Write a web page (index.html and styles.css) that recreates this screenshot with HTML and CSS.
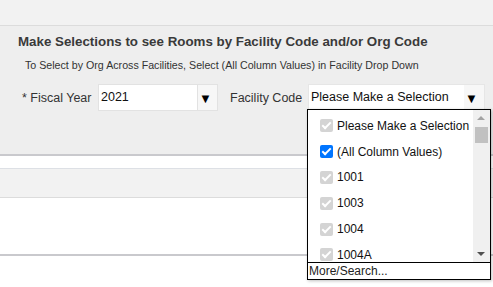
FILE: index.html
```html
<!DOCTYPE html>
<html>
<head>
<meta charset="utf-8">
<link rel="stylesheet" href="styles.css">
</head>
<body>
<div class="topbar"></div>
<div class="panel">
  <div class="title">Make Selections to see Rooms by Facility Code and/or Org Code</div>
  <div class="hint">To Select by Org Across Facilities, Select (All Column Values) in Facility Drop Down</div>
  <div class="row">
    <span class="label">* Fiscal Year</span>
    <div class="select fy">
      <span class="val">2021</span>
      <span class="arrow">&#9660;</span>
    </div>
    <span class="label fc">Facility Code</span>
    <div class="select fac">
      <span class="val">Please Make a Selection</span>
      <span class="arrow">&#9660;</span>
    </div>
  </div>
</div>
<div class="gap"></div>
<div class="band"></div>
<div class="body"></div>

<div class="dropdown">
  <div class="list">
    <div class="items">
      <div class="item"><span class="cb gray"></span>Please Make a Selection</div>
      <div class="item"><span class="cb blue"></span>(All Column Values)</div>
      <div class="item"><span class="cb gray"></span>1001</div>
      <div class="item"><span class="cb gray"></span>1003</div>
      <div class="item"><span class="cb gray"></span>1004</div>
      <div class="item"><span class="cb gray"></span>1004A</div>
    </div>
    <div class="scroll">
      <span class="up"></span>
      <span class="thumb"></span>
      <span class="down"></span>
    </div>
  </div>
  <div class="more">More/Search...</div>
</div>
</body>
</html>
```
FILE: styles.css
```css
html, body {
  margin: 0;
  padding: 0;
  background: #fff;
  font-family: "Liberation Sans", Arial, sans-serif;
  width: 493px;
  height: 287px;
  overflow: hidden;
}
.topbar {
  height: 25px;
  background: #f2f2f2;
  border-bottom: 1px solid #dcdcdc;
}
.panel {
  background: #eeeeee;
  border-bottom: 2px solid #c9c9cd;
  padding: 8px 0 0 0;
  box-sizing: border-box;
  height: 130px;
}
.title {
  font-size: 13.33px;
  font-weight: bold;
  color: #3a3a3a;
  padding-left: 18px;
  line-height: 16px;
}
.hint {
  font-size: 10.67px;
  color: #333;
  padding-left: 25px;
  margin-top: 9px;
  line-height: 12px;
}
.row {
  display: flex;
  align-items: center;
  margin-top: 13px;
  padding-left: 22px;
  height: 27px;
}
.label {
  font-size: 12.5px;
  color: #333;
  width: 70px;
  margin-right: 6px;
  white-space: nowrap;
}
.label.fc {
  width: 72px;
  margin-left: 12px;
  margin-right: 6px;
}
.select {
  display: flex;
  height: 27px;
  box-sizing: border-box;
  border: 1px solid #e2e2e2;
  background: #f7f7f7;
}
.select .val {
  background: #fff;
  font-size: 12.5px;
  color: #111;
  line-height: 25px;
  padding-left: 2px;
  box-sizing: border-box;
}
.select .arrow {
  font-size: 13px;
  color: #000;
  line-height: 27px;
  padding-left: 1px;
  box-sizing: border-box;
}
.fy .val { width: 99px; border-right: 1px solid #e2e2e2; }
.fy .arrow { width: 19px; }
.fac { border-color: #e6e6e6; }
.fac .val { width: 155px; }
.fac .arrow { width: 20px; }
.gap {
  height: 12px;
}
.band {
  height: 28px;
  background: #f2f2f2;
  border-top: 1px solid #dde0e5;
  border-bottom: 1px solid #dcdcdc;
}
.body {
  height: 56px;
  border-bottom: 2px solid #c9c9cd;
}
.dropdown {
  position: absolute;
  left: 307px;
  top: 109px;
  width: 184px;
  border: 1px solid #000;
  background: #fff;
  box-shadow: 1px 1px 3px rgba(0,0,0,0.25);
  box-sizing: border-box;
}
.list {
  display: flex;
  height: 152px;
  overflow: hidden;
}
.items {
  flex: 1;
  padding-left: 12px;
  padding-top: 3px;
}
.item {
  display: flex;
  align-items: center;
  height: 25.8px;
  font-size: 12px;
  color: #111;
}
.cb {
  width: 13px;
  height: 13px;
  border-radius: 2px;
  margin-right: 4px;
  position: relative;
  flex: none;
}
.cb::after {
  content: "";
  position: absolute;
  left: 4px;
  top: 1px;
  width: 3px;
  height: 7px;
  border: solid #fff;
  border-width: 0 2px 2px 0;
  transform: rotate(45deg);
}
.cb.gray { background: #d4d4d4; }
.cb.blue { background: #0075ff; }
.scroll {
  width: 17px;
  background: #f0f0f0;
  position: relative;
}
.scroll .up, .scroll .down {
  position: absolute;
  left: 4px;
  width: 0;
  height: 0;
  border-left: 4px solid transparent;
  border-right: 4px solid transparent;
}
.scroll .up { top: 6px; border-bottom: 4px solid #a3a3a3; }
.scroll .down { bottom: 6px; border-top: 4px solid #505050; }
.scroll .thumb {
  position: absolute;
  left: 2px;
  top: 17px;
  width: 13px;
  height: 16px;
  background: #c1c1c1;
}
.more {
  border-top: 1px solid #000;
  font-size: 12px;
  color: #222;
  line-height: 16px;
  height: 16px;
  padding-left: 1px;
}
```
